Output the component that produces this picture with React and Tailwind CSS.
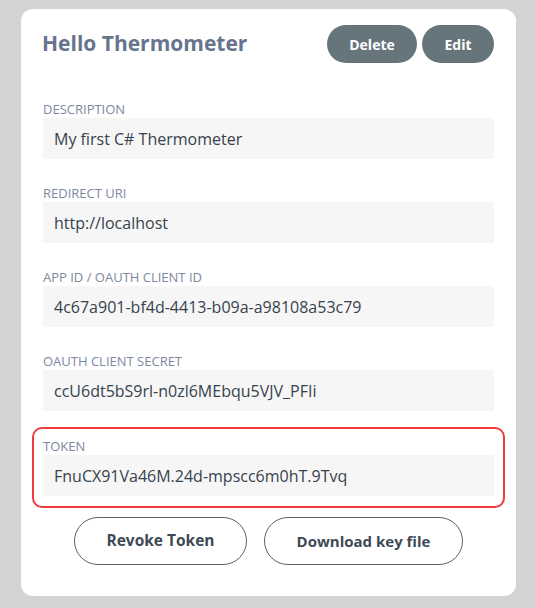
const fields = [
  { label: 'DESCRIPTION', value: 'My first C# Thermometer' },
  { label: 'REDIRECT URI', value: 'http://localhost' },
  { label: 'APP ID / OAUTH CLIENT ID', value: '4c67a901-bf4d-4413-b09a-a98108a53c79' },
  { label: 'OAUTH CLIENT SECRET', value: 'ccU6dt5bS9rl-n0zl6MEbqu5VJV_PFIi' },
];

function Field({ label, value }) {
  return (
    <div className="flex flex-col">
      <span className="text-[13px] leading-[17px] text-[#7c88a0]">{label}</span>
      <div className="h-[41px] bg-[#f6f6f6] flex items-center px-[11px] text-[16px] text-[#36424d]">
        {value}
      </div>
    </div>
  );
}

export default function App() {
  return (
    <div
      className="min-h-[608px] bg-[#d3d3d3] pt-[9px] pl-[21px]"
      style={{ fontFamily: '"Open Sans", "Noto Sans", sans-serif' }}
    >
      <div className="w-[495px] h-[587px] bg-white rounded-[12px] px-[22px] pt-[16px] flex flex-col">
        {/* Header */}
        <div className="flex items-center justify-between">
          <h1 className="text-[21px] font-bold text-[#67748e] -ml-px">Hello Thermometer</h1>
          <div className="flex gap-[5px]">
            <button className="h-[38px] w-[90px] rounded-full bg-[#66757b] text-white text-[14px] font-bold">
              Delete
            </button>
            <button className="h-[38px] w-[72px] rounded-full bg-[#66757b] text-white text-[14px] font-bold">
              Edit
            </button>
          </div>
        </div>

        <div className="flex flex-col gap-[26px] mt-[38px]">
          {fields.map((f) => (
            <Field key={f.label} {...f} />
          ))}
        </div>

        {/* Token */}
        <div className="mt-[16px] -mx-[11px] px-[9px] pt-[9px] pb-[10px] border-2 border-[#ef3b3b] rounded-[10px]">
          <Field label="TOKEN" value="FnuCX91Va46M.24d-mpscc6m0hT.9Tvq" />
        </div>

        <div className="flex justify-center gap-[17px] mt-[9px]">
          <button className="h-[48px] w-[173px] rounded-full border border-[#56636c] text-[15.5px] font-bold text-[#3d4a56]">
            Revoke Token
          </button>
          <button className="h-[48px] w-[199px] rounded-full border border-[#56636c] text-[15px] font-bold text-[#3d4a56]">
            Download key file
          </button>
        </div>
      </div>
    </div>
  );
}
